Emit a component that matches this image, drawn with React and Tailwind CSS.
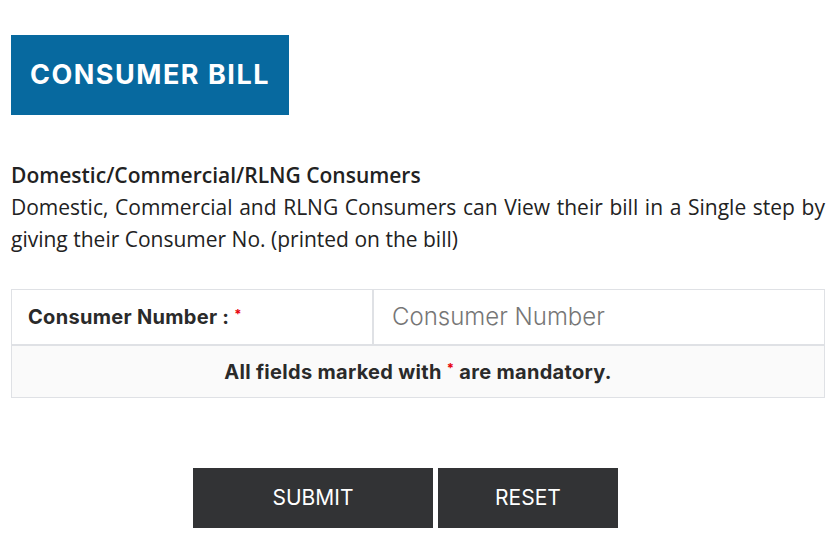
export default function App() {
  return (
    <div className="w-[837px] h-[546px] bg-white overflow-hidden px-[11px] pt-[35px]">
      <div className="w-[278px] h-[80px] bg-[#07699f] flex items-center justify-center">
        <h1 className="text-white text-[27px] font-bold tracking-[1.5px] font-['Inter',sans-serif]">CONSUMER BILL</h1>
      </div>
      <div className="mt-[44px] text-[21px] leading-[32px] text-[#222] font-['Open_Sans',sans-serif] text-justify w-[814px]">
        <div className="font-semibold">Domestic/Commercial/RLNG Consumers</div>
        <p>Domestic, Commercial and RLNG Consumers can View their bill in a Single step by giving their Consumer No. (printed on the bill)</p>
      </div>
      <div className="mt-[34px] w-[814px] border border-[#dfe1e5] font-['Inter',sans-serif]">
        <div className="flex h-[56px] border-b-2 border-[#dfe1e5]">
          <div className="w-[362px] border-r-2 border-[#dfe1e5] flex items-center pl-[16px] text-[20px] font-bold tracking-[0.3px] text-[#2a2a2a]">
            Consumer Number :<span className="text-red-600 text-[13px] ml-[5px] -mt-[5px]">*</span>
          </div>
          <div className="flex-1 flex items-center pl-[18px]">
            <input className="w-full outline-none text-[24px] font-light text-[#333] placeholder:text-[#767676] bg-transparent" placeholder="Consumer Number" />
          </div>
        </div>
        <div className="h-[51px] bg-[#fafafa] flex items-center justify-center text-[20px] font-bold tracking-[0.3px] text-[#2a2a2a]">
          All fields marked with<span className="text-red-600 text-[13px] mx-[5px] -mt-[5px]">*</span>are mandatory.
        </div>
      </div>
      <div className="mt-[70px] flex gap-[5px] pl-[182px] font-['Inter',sans-serif]">
        <button className="w-[240px] h-[60px] bg-[#323335] text-white text-[21px]">SUBMIT</button>
        <button className="w-[180px] h-[60px] bg-[#323335] text-white text-[21px]">RESET</button>
      </div>
    </div>
  );
}
